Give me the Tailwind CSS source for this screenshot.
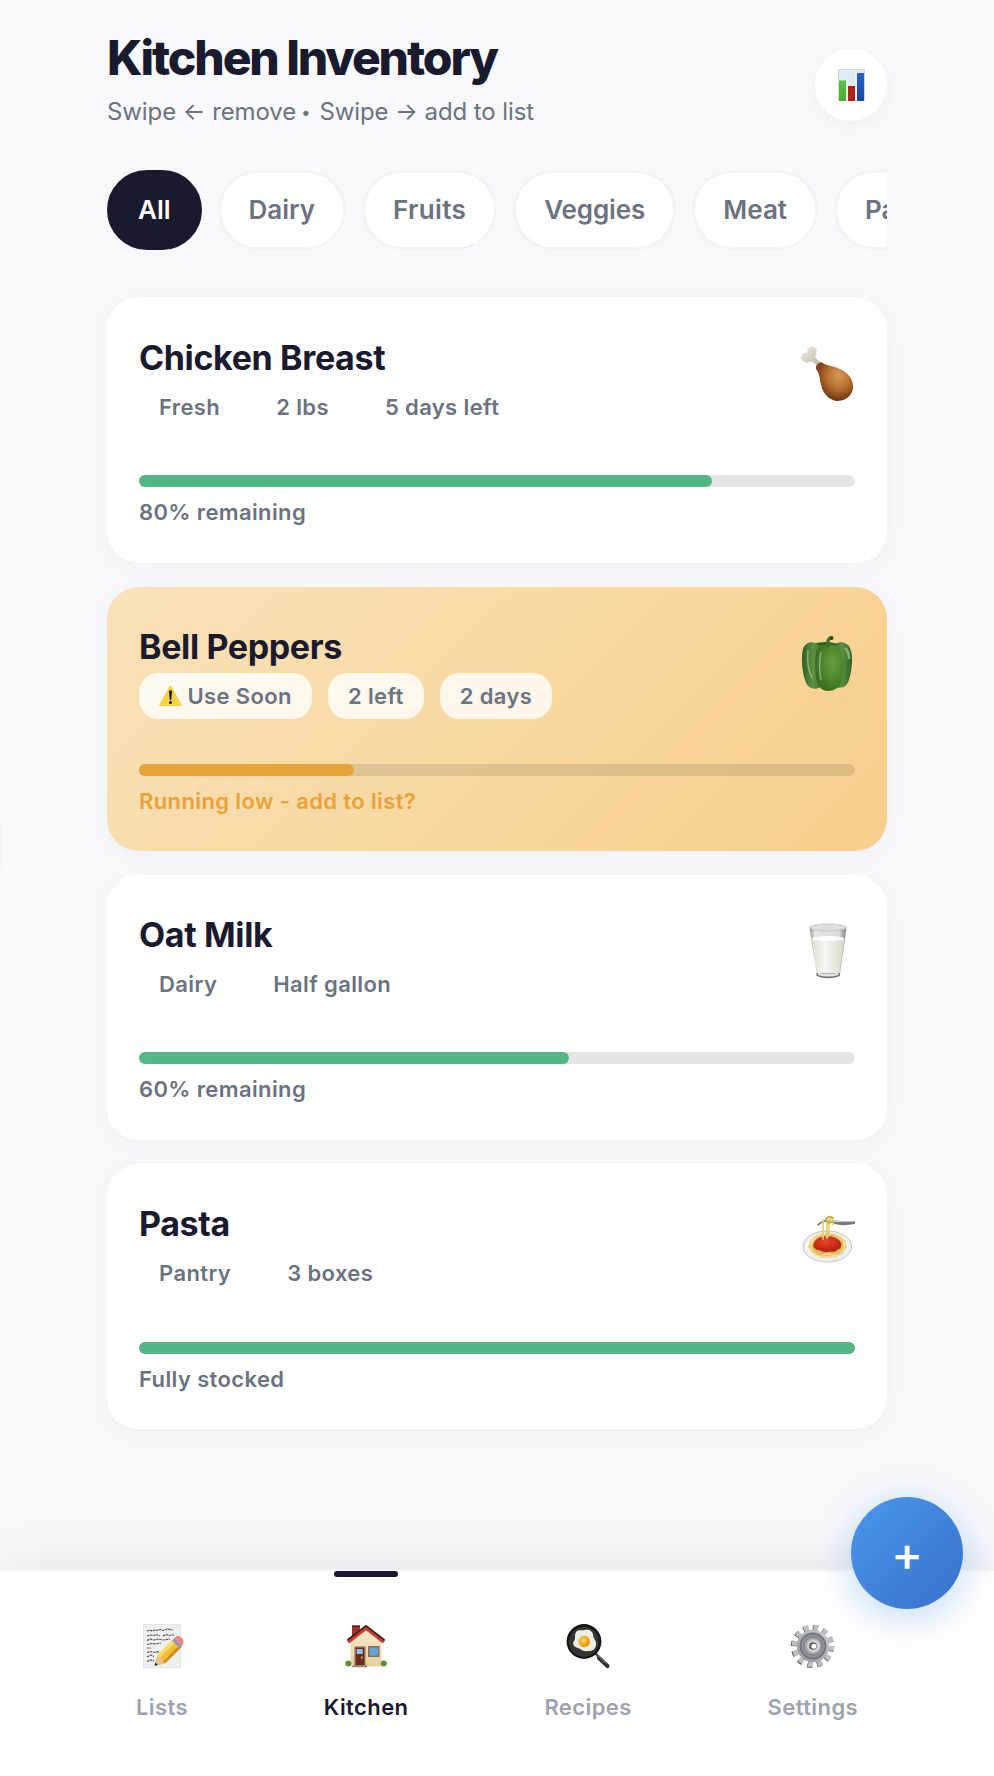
<!DOCTYPE html>
<html lang="en">
<head>
<meta charset="utf-8">
<title>Kitchen Inventory</title>
<script src="https://cdn.jsdelivr.net/npm/@tailwindcss/browser@4"></script>
</head>
<body class="bg-[#f8f9fd] font-['Inter',sans-serif] text-[#1a1a2e]">
<div class="relative flex h-[1776px] w-[994px] flex-col overflow-hidden">
  <div class="absolute top-[825px] -left-[11px] h-[43px] w-[10px] shadow-[0_0_4px_rgba(0,0,0,0.12)]"></div>

  <main class="mx-auto flex w-[780px] flex-1 flex-col pt-7">
    <header class="flex items-start justify-between">
      <div>
        <h1 class="text-[48px] leading-[59px] font-extrabold tracking-[-2.1px]">Kitchen Inventory</h1>
        <p class="mt-[7px] text-[24px] leading-9 tracking-[-0.1px] text-[#6b7280]">Swipe ← remove <span class="inline-block w-[10px] -translate-x-0.5 -translate-y-[2px] text-center text-[17px] leading-none">•</span> Swipe → add to list</p>
      </div>
      <button class="mt-[21px] flex size-18 items-center justify-center rounded-full bg-white shadow-[0_4px_16px_rgba(0,0,0,0.04)]">
        <svg class="h-8 w-[27px]" viewBox="0 0 27 32">
          <defs>
            <linearGradient id="cg" x2="0" y2="1"><stop stop-color="#5cc43f"/><stop offset="1" stop-color="#4cab33"/></linearGradient>
            <linearGradient id="cb" x2="0" y2="1"><stop stop-color="#2a62cf"/><stop offset="1" stop-color="#1d489c"/></linearGradient>
          </defs>
          <rect x=".5" y=".5" width="26" height="31.5" fill="#dfe9f1" stroke="#cfd9dc"/>
          <rect x="1" y="11.5" width="7.3" height="20.5" fill="url(#cg)"/>
          <rect x="10" y="17" width="7" height="15" fill="#b32318"/>
          <rect x="19" y="4" width="7" height="28" fill="url(#cb)"/>
          <path d="M9 11v21M18 4v28" stroke="#f4f8fa" stroke-width="1.2"/>
        </svg>
      </button>
    </header>

    <div class="mt-10 flex gap-4 overflow-hidden text-[26px] leading-[34px] font-semibold whitespace-nowrap text-[#6b7280]">
      <button class="h-20 shrink-0 rounded-[40px] border-3 border-[#1a1a2e] bg-[#1a1a2e] px-7 text-white">All</button>
      <button class="h-20 shrink-0 rounded-[40px] border-3 border-[#f3f4f6] bg-white px-7">Dairy</button>
      <button class="h-20 shrink-0 rounded-[40px] border-3 border-[#f3f4f6] bg-white px-7 tracking-[0.35px]">Fruits</button>
      <button class="h-20 shrink-0 rounded-[40px] border-3 border-[#f3f4f6] bg-white px-7 tracking-[-0.1px]">Veggies</button>
      <button class="h-20 shrink-0 rounded-[40px] border-3 border-[#f3f4f6] bg-white px-7">Meat</button>
      <button class="h-20 shrink-0 rounded-[40px] border-3 border-[#f3f4f6] bg-white px-7">Pantry</button>
    </div>

    <section class="mt-12 flex flex-col gap-6 text-[22px] font-semibold text-[#6b7280]">
      <article class="h-[264.7px] rounded-[32px] bg-white px-8 pt-8 shadow-[0_4px_24px_rgba(0,0,0,0.04)]">
        <div class="flex h-[100.7px] justify-between">
          <div>
            <h2 class="pt-px text-[34px] leading-[54px] font-bold tracking-[-0.36px] text-[#1a1a2e]">Chicken Breast</h2>
            <div class="-mt-px flex gap-4 leading-[26.7px] tracking-[0.38px]">
              <span class="rounded-3xl px-5 py-[10px]">Fresh</span>
              <span class="rounded-3xl px-5 py-[10px]">2 lbs</span>
              <span class="rounded-3xl px-5 py-[10px]">5 days left</span>
            </div>
          </div>
          <svg class="mt-3 h-[62px] w-14 overflow-visible" viewBox="0 0 56 62">
            <defs>
              <radialGradient id="dm" cx=".62" cy=".35" r=".7"><stop stop-color="#d89a55"/><stop offset=".5" stop-color="#b56a2c"/><stop offset="1" stop-color="#5e2a0e"/></radialGradient>
              <linearGradient id="db" x2="1" y2="1"><stop stop-color="#f3efe6"/><stop offset="1" stop-color="#bdb5a6"/></linearGradient>
            </defs>
            <path d="M19 24 12.500 19.500C8 21.500 3 20 2.200 16.500c-.8-4 2-6 6.300-5.500C8 7 10 4 13.500 4.500c4.500.5 5 6 2.500 10.500l6 6z" fill="url(#db)"/>
            <path d="M17 27c0-4 2-6 5.500-6.500 5 3 13 3.500 20.500 7.500C51 32.500 55 39.500 54 46.500c-1 8-8.500 12.500-16 12.500-8-1-13.500-7-15.500-14.500C20.500 37.500 21 31.500 17 27z" fill="url(#dm)"/>
            <path d="M17 27c0-4 2-6 5.500-6.500l1 2.500c-2 .5-3.500 2-4 5z" fill="#8a431c"/>
          </svg>
        </div>
        <div class="mt-[44.3px] h-3 rounded-md bg-black/10"><div class="h-3 rounded-md bg-[#55b685]" style="width:80%"></div></div>
        <p class="mt-[13px] leading-[25.4px] tracking-[0.38px]">80% remaining</p>
      </article>

      <article class="h-[264.7px] rounded-[32px] bg-linear-135 from-[#f9e2b9] to-[#f7ce8a] px-8 pt-8 shadow-[0_4px_24px_rgba(0,0,0,0.04)]">
        <div class="flex h-[100.7px] justify-between">
          <div>
            <h2 class="pt-px text-[34px] leading-[54px] font-bold tracking-[-0.36px] text-[#1a1a2e]">Bell Peppers</h2>
            <div class="-mt-px flex gap-4 leading-[26.7px] tracking-[0.38px]">
              <span class="flex items-center rounded-[20px] bg-white/80 px-5 py-[10px]">
                <svg class="mr-[5.5px] h-5 w-[23px]" viewBox="0 0 23 20">
                  <defs><linearGradient id="wy" x2="0" y2="1"><stop stop-color="#f6c83a"/><stop offset="1" stop-color="#fbd64e"/></linearGradient></defs>
                  <path d="M10.400 1Q11.500-.8 12.600 1L22.700 18.500Q23.200 20 21.500 20H1.500Q-.2 20 .3 18.500z" fill="url(#wy)"/>
                  <path d="M10 5q1.500-1.500 3 0l-.7 8.500q-.8.800-1.600 0z" fill="#1d1a12"/><circle cx="11.500" cy="16.600" r="1.500" fill="#1d1a12"/>
                </svg>Use Soon</span>
              <span class="rounded-[20px] bg-white/80 px-5 py-[10px]">2 left</span>
              <span class="rounded-[20px] bg-white/80 px-5 py-[10px]">2 days</span>
            </div>
          </div>
          <svg class="mt-3 h-[62px] w-14 overflow-visible" viewBox="0 0 56 62">
            <defs>
              <linearGradient id="p1" x2="1"><stop stop-color="#2f5f24"/><stop offset=".5" stop-color="#5c9243"/><stop offset="1" stop-color="#2f5f20"/></linearGradient>
              <radialGradient id="p2" cx=".62" cy=".4" r=".8"><stop stop-color="#6a9c3f"/><stop offset=".5" stop-color="#4a842c"/><stop offset="1" stop-color="#2c5c16"/></radialGradient>
            </defs>
            <path d="M13 13q14-4 26 0l3 40H15z" fill="#33631f"/>
            <path d="M20 14C14 9 6 11 4 18 2 26 3 40 6 49c2 7 7 9.500 12 8.500 6-1 8-8 8-20 0-10-1-18-6-23.500z" fill="url(#p1)"/>
            <path d="M36 13c5-3.500 12-2 15 4 3.500 8 2 22-1 32-2 6-6 8.500-11 7.500-5-2-6-9-6-20s0-19 3-23.500z" fill="url(#p1)"/>
            <path d="M29 15c-5-3-11 0-12 8-1.500 10-1 20 1 27 2 7 6 10 11 10 7 0 12-4 14-11 2-9 2-20-1-27-2.500-7-8-10-13-7z" fill="url(#p2)"/>
            <path d="M9 19c-1 10 0 20 4 28M22 21c-2 9-2 18 0 28" fill="none" stroke="#d2e4c1" stroke-width="1.500" opacity=".5"/>
            <path d="M46 17q4 3 4 11" fill="none" stroke="#bcd5ae" stroke-width="2.500" opacity=".6"/>
            <path d="M28.500 15q0-8 4-8.500" fill="none" stroke="#3a7423" stroke-width="3.400" stroke-linecap="round"/>
            <circle cx="32.600" cy="7.300" r="1.800" fill="#224d12"/>
          </svg>
        </div>
        <div class="mt-[44.3px] h-3 rounded-md bg-black/10"><div class="h-3 rounded-md bg-[#e8a23a]" style="width:30%"></div></div>
        <p class="mt-[13px] leading-[25.4px] tracking-[0.38px] text-[#e8a23a]">Running low - add to list?</p>
      </article>

      <article class="h-[264.7px] rounded-[32px] bg-white px-8 pt-8 shadow-[0_4px_24px_rgba(0,0,0,0.04)]">
        <div class="flex h-[100.7px] justify-between">
          <div>
            <h2 class="pt-px text-[34px] leading-[54px] font-bold tracking-[-0.36px] text-[#1a1a2e]">Oat Milk</h2>
            <div class="-mt-px flex gap-4 leading-[26.7px] tracking-[0.38px]">
              <span class="rounded-3xl px-5 py-[10px]">Dairy</span>
              <span class="rounded-3xl px-5 py-[10px]">Half gallon</span>
            </div>
          </div>
          <svg class="mt-3 h-[62px] w-14 overflow-visible" viewBox="0 0 56 62">
            <defs>
              <linearGradient id="mg" x2="1"><stop stop-color="#8d8d8d"/><stop offset=".15" stop-color="#e6e6e6"/><stop offset=".8" stop-color="#dcdcdc"/><stop offset="1" stop-color="#7d7d7d"/></linearGradient>
              <linearGradient id="mm" x2="1"><stop stop-color="#e2e0d8"/><stop offset=".4" stop-color="#f5f4ee"/><stop offset="1" stop-color="#dad8cf"/></linearGradient>
            </defs>
            <path d="M10.500 8 17.500 56.500q11.500 5 23.500 0L47.500 8z" fill="url(#mg)"/>
            <path d="M17.500 54v3q11.500 4.500 23.500 0v-3z" fill="#77776f"/>
            <path d="M19 53.500q10 3 20.500 0v2.500q-10 3-20.500 0z" fill="#e4e4e0"/>
            <path d="M12.800 20 18.300 53q10.500 3 21.900 0L45.500 20z" fill="url(#mm)"/>
            <ellipse cx="29.100" cy="19.500" rx="16" ry="2.600" fill="#fffffa"/>
            <ellipse cx="29" cy="8.500" rx="18.300" ry="3.600" fill="#dedede" stroke="#bdbdbd" stroke-width=".8"/>
          </svg>
        </div>
        <div class="mt-[44.3px] h-3 rounded-md bg-black/10"><div class="h-3 rounded-md bg-[#55b685]" style="width:60%"></div></div>
        <p class="mt-[13px] leading-[25.4px] tracking-[0.38px]">60% remaining</p>
      </article>

      <article class="h-[264.7px] rounded-[32px] bg-white px-8 pt-8 shadow-[0_4px_24px_rgba(0,0,0,0.04)]">
        <div class="flex h-[100.7px] justify-between">
          <div>
            <h2 class="pt-px text-[34px] leading-[54px] font-bold tracking-[-0.36px] text-[#1a1a2e]">Pasta</h2>
            <div class="-mt-px flex gap-4 leading-[26.7px] tracking-[0.38px]">
              <span class="rounded-3xl px-5 py-[10px]">Pantry</span>
              <span class="rounded-3xl px-5 py-[10px]">3 boxes</span>
            </div>
          </div>
          <svg class="mt-3 h-[62px] w-14 overflow-visible" viewBox="0 0 56 62">
            <defs><radialGradient id="ps" cx=".45" cy=".35"><stop stop-color="#e8452f"/><stop offset="1" stop-color="#bd2712"/></radialGradient></defs>
            <ellipse cx="28.300" cy="38.500" rx="24.300" ry="15.500" fill="#eeeff1" stroke="#bcbdc0" stroke-width=".9"/>
            <ellipse cx="28.300" cy="37.500" rx="21" ry="12.500" fill="#f8f8f8"/>
            <ellipse cx="28.500" cy="37.500" rx="17" ry="10.500" fill="#d9b75a" stroke="#e3c468" stroke-width="4" stroke-dasharray="5 .7"/>
            <path d="M10 38c1-6 8-11 16-12M12 43c6 7 16 8 26 4M46 34q1 7-5 11M17 29q-7 6-4 14M38 27q8 4 7 12M22 48q8-5 15 2" fill="none" stroke="#f5e29a" stroke-width="1.200"/>
            <path d="M14.500 36c2-6 8-8 14-8s12 3 13.500 7c1 4-1 6-4 7-2 3-6 1-9 2-4 1-6-1-9-2-3 0-6-2-5.500-6z" fill="url(#ps)"/>
            <path d="M18 16.500q5-4.500 10-4.500 8 3 28 1v3q-16 3-25-2-7-1.500-12 4z" fill="#77797d"/>
            <path d="M36 12.500q9 2 20 .7" stroke="#c3c5c8" fill="none"/>
            <path d="M24 12v19M28.500 10q-1 10-1 20M31.500 9q-2 10-2.500 20M33 11q2 5 1 6" fill="none" stroke="#e6cc6b" stroke-width="1.700" stroke-linecap="round"/>
            <path d="M27 11q3-4 7-1M28 14q3 2 6-1" fill="none" stroke="#cfae45" stroke-width="2" stroke-linecap="round"/>
          </svg>
        </div>
        <div class="mt-[45px] h-3 rounded-md bg-black/10"><div class="h-3 rounded-md bg-[#55b685]" style="width:100%"></div></div>
        <p class="mt-[13px] leading-[25.4px] tracking-[0.38px]">Fully stocked</p>
      </article>
    </section>
  </main>

  <nav class="relative flex h-[207px] justify-evenly border-t-2 border-[#f3f4f6] bg-white pt-[51px] text-[22px] leading-[26px] font-semibold tracking-[0.4px] text-[#9ca3af] shadow-[0_-8px_48px_rgba(0,0,0,0.08)]">
    <a class="flex flex-col items-center">
      <svg class="ml-0.5 size-12" viewBox="0 0 48 48">
        <rect x="4.500" y="2.300" width="37" height="43.500" fill="#efefef" stroke="#dedede" stroke-width=".8"/>
        <path d="M8 9l3-1 2 1 3-1 2 .5 3-1 3 1 4-1.500 6 1M8 14l4-1 3 .5 2-1 4 1.500M24 14l3-1.500 3 1 5-.5M8 18.500l3-1.500 4 1 4-1 5 1 7-1M8 22.500l5-1 3 .5 6-1M8 26h4M8 30.500l4-1 3 1 5-1M8 35l4-2 3 1.500M8 39.500l4-1.500 3 1" fill="none" stroke="#555" stroke-width="1.200" stroke-dasharray="2.500 .7"/>
        <path d="M16 44 19 35 34.500 19.500 41 26 26 41z" fill="#000" opacity=".25"/>
        <path d="M18 33.500 34 17.500l8 8-16 16z" fill="#f1bf37"/>
        <path d="M18 33.500 34 17.500l2.500 2.500-16 16z" fill="#fbdc69"/><path d="M24 39.500 40 23.500l2 2-16 16z" fill="#cf9019"/>
        <path d="M18 33.500 15.500 43.800 26 41.500z" fill="#e6c190"/><path d="M16.300 40.500 15.500 43.800 19 43z" fill="#2a2725"/>
        <path d="M33 18.500l2.500-2.500 8 8-2.500 2.500z" fill="#8f9bad"/><path d="M35.500 16q3-3.500 6.800-.5t1.200 7.500l-1 1z" fill="#ec8585"/>
      </svg>
      <span class="mt-[23.700px]">Lists</span>
    </a>
    <a class="relative flex flex-col items-center text-[#1a1a2e]">
      <i class="absolute -top-[51px] left-1/2 h-1.5 w-16 -translate-x-1/2 rounded-[3px] bg-[#1a1a2e]"></i>
      <svg class="size-12" viewBox="0 0 48 48">
        <defs><linearGradient id="hw" x2="0" y2="1"><stop stop-color="#fbeccb"/><stop offset="1" stop-color="#e6cf9f"/></linearGradient></defs>
        <rect x="10" y="3.500" width="8" height="13" fill="#9e3327"/><rect x="10" y="3.500" width="8" height="1.500" fill="#6b1f18"/>
        <path d="M8.500 19 24 6l15.500 13v25.500h-31z" fill="url(#hw)"/>
        <path d="M6 20 24 6l18 14" fill="none" stroke="#d03a31" stroke-width="3.600"/>
        <path d="M5.500 18 24 3.800 42.500 18" fill="none" stroke="#33282a" stroke-width="1.700"/>
        <rect x="12.500" y="24.500" width="11" height="19" fill="#88664b"/><rect x="14" y="26" width="8" height="17.500" fill="#6b2a1c"/>
        <rect x="14.700" y="27" width="6" height="5" fill="#86c1ef"/><circle cx="19.800" cy="35.500" r=".9" fill="#f5c451"/>
        <rect x="26" y="24" width="11.500" height="11" fill="#8a6e58"/><rect x="27.500" y="25.500" width="8.500" height="8" fill="#63a3dd"/>
        <path d="M11 43h14v2.300H10z" fill="#92887d"/>
        <circle cx="6.300" cy="41.500" r="3" fill="#5e8f35"/><circle cx="41.800" cy="41.500" r="3" fill="#5e8f35"/>
      </svg>
      <span class="mt-[23.700px]">Kitchen</span>
    </a>
    <a class="flex flex-col items-center">
      <svg class="size-12" viewBox="0 0 48 48">
        <defs><radialGradient id="ey" cx=".4" cy=".4"><stop stop-color="#ffd966"/><stop offset="1" stop-color="#e9970f"/></radialGradient></defs>
        <path d="M31 31l4 4" stroke="#4b4b4b" stroke-width="2.500"/>
        <path d="M35 36l8.500 8" stroke="#333" stroke-width="4.200" stroke-linecap="round"/><path d="M34 33.500l8 8" stroke="#8b8b8b" stroke-width="1"/>
        <circle cx="20" cy="19.500" r="17.400" fill="#161616"/><circle cx="20" cy="19.800" r="14.500" fill="#333" stroke="#444" stroke-width=".7"/>
        <path d="M12 10c3-3 5-1 8-2 5-1 9 1 9 5 0 3 4 6 3 10-1 6-5 6-9 6-4 1-6-2-9-3-4-1-6-4-4-7 2-3 0-6 2-9z" fill="#eceee2"/>
        <circle cx="20.300" cy="19.500" r="5.700" fill="url(#ey)"/>
      </svg>
      <span class="mt-[23.700px]">Recipes</span>
    </a>
    <a class="flex flex-col items-center">
      <svg class="size-12" viewBox="0 0 48 48">
        <defs><linearGradient id="gg" x1="1" x2="0" y2="1"><stop stop-color="#c9ced6"/><stop offset="1" stop-color="#94979f"/></linearGradient></defs>
        <circle cx="23.300" cy="24.500" r="18.500" fill="none" stroke="#5c5550" stroke-width="6" stroke-dasharray="4.800 4.886"/>
        <circle cx="24" cy="24" r="18.500" fill="none" stroke="#b9bec7" stroke-width="5.600" stroke-dasharray="4.800 4.886"/>
        <circle cx="24" cy="24" r="16.300" fill="url(#gg)"/>
        <circle cx="24" cy="24" r="12.500" fill="#8f949a" stroke="#6f7478" stroke-width="1.800"/>
        <circle cx="24" cy="24" r="9" fill="#a5aab0" stroke="#777c80" stroke-width="1"/>
        <circle cx="24.500" cy="24" r="6.500" fill="#ccd3dc"/><circle cx="24" cy="24" r="3.800" fill="#62594e"/><circle cx="24.800" cy="24.300" r="2.500" fill="#fff"/>
      </svg>
      <span class="mt-[23.700px]">Settings</span>
    </a>
  </nav>

  <button class="absolute top-[1497px] left-[851px] size-28 rounded-full bg-linear-135 from-[#4a97ee] to-[#3871c8] pt-0.5 text-[48px] leading-none font-medium text-white shadow-[0_8px_40px_rgba(74,144,226,0.35)]">+</button>
</div>
</body>
</html>
